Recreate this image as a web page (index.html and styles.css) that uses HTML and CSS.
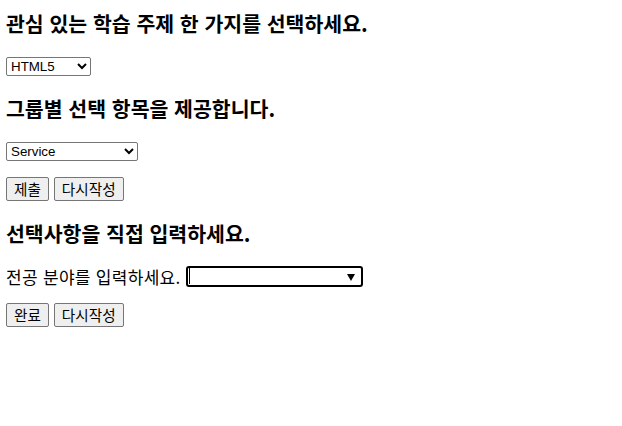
FILE: index.html
```html
<!DOCTYPE html>
<html lang="ko">
<head>
  <meta charset="UTF-8">
  <meta name="viewport" content="width=device-width, initial-scale=1.0">
  <title>선택 목록</title>
  <link rel="stylesheet" href="styles.css">
</head>
<body>
  <form>
    <h3 class="title first">관심 있는 학습 주제 한 가지를 선택하세요.</h3>
    <select class="pick pick-topic" name="topic">
      <option>HTML5</option>
      <option>CSS3</option>
      <option>JavaScript</option>
      <option>jQuery</option>
    </select>

    <h3 class="title">그룹별 선택 항목을 제공합니다.</h3>
    <select class="pick pick-group" name="group">
      <optgroup label="Web">
        <option>Service</option>
        <option>Design</option>
      </optgroup>
      <optgroup label="App">
        <option>Android</option>
        <option>iOS</option>
      </optgroup>
    </select>

    <div class="actions">
      <button type="submit" class="btn">제출</button>
      <button type="reset" class="btn">다시작성</button>
    </div>
  </form>

  <form>
    <h3 class="title">선택사항을 직접 입력하세요.</h3>
    <div class="field">
      <label for="major">전공 분야를 입력하세요.</label>
      <span class="combo">
        <input type="text" id="major" class="combo-input" list="majors">
        <span class="combo-caret"></span>
        <span class="combo-arrow"></span>
      </span>
      <datalist id="majors">
        <option value="컴퓨터공학"></option>
        <option value="정보통신"></option>
        <option value="디자인"></option>
      </datalist>
    </div>
    <div class="actions">
      <button type="submit" class="btn">완료</button>
      <button type="reset" class="btn">다시작성</button>
    </div>
  </form>
</body>
</html>
```

FILE: styles.css
```css
body {
  margin: 0;
  padding: 10px 6px 0;
  background: #fff;
  color: #000;
  font-family: "Noto Sans CJK KR", "Noto Sans", sans-serif;
  font-size: 16px;
  line-height: 21px;
}
form {
  margin: 0;
}
.title {
  font-size: 20.5px;
  font-weight: bold;
  line-height: 26px;
  margin: 19px 0 0;
}
.title.first {
  margin-top: 0;
}
.pick {
  display: block;
  margin-top: 21px;
  font-family: "Liberation Sans", Arial, sans-serif;
  font-size: 13.33px;
  height: 19px;
  padding: 0;
  border: 1px solid #767676;
  border-radius: 2px;
  background: #fff;
  color: #000;
}
.pick-topic {
  width: 85px;
}
.pick-group {
  width: 132px;
}
.actions {
  margin-top: 16px;
  display: flex;
  gap: 5px;
}
.btn {
  font-family: "Noto Sans CJK KR", sans-serif;
  font-size: 14.6px;
  line-height: 18px;
  padding: 2px 7px;
  margin: 0;
  background: #efefef;
  border: 1px solid #767676;
  border-radius: 2px;
  color: #000;
}
.field {
  margin-top: 20px;
  display: flex;
  align-items: center;
  gap: 5px;
}
.field label {
  font-size: 17px;
  letter-spacing: 0.3px;
}
.combo {
  position: relative;
  display: block;
}
.combo-input {
  display: block;
  box-sizing: border-box;
  width: 177px;
  height: 21px;
  padding: 0 2px;
  border: 2px solid #000;
  border-radius: 3px;
  outline: none;
  font-size: 13.33px;
}
.combo-caret {
  position: absolute;
  left: 3px;
  top: 2px;
  width: 1px;
  height: 16px;
  background: #000;
}
.combo-arrow {
  position: absolute;
  right: 8px;
  top: 8px;
  border-left: 4px solid transparent;
  border-right: 4px solid transparent;
  border-top: 7px solid #000;
}
```
